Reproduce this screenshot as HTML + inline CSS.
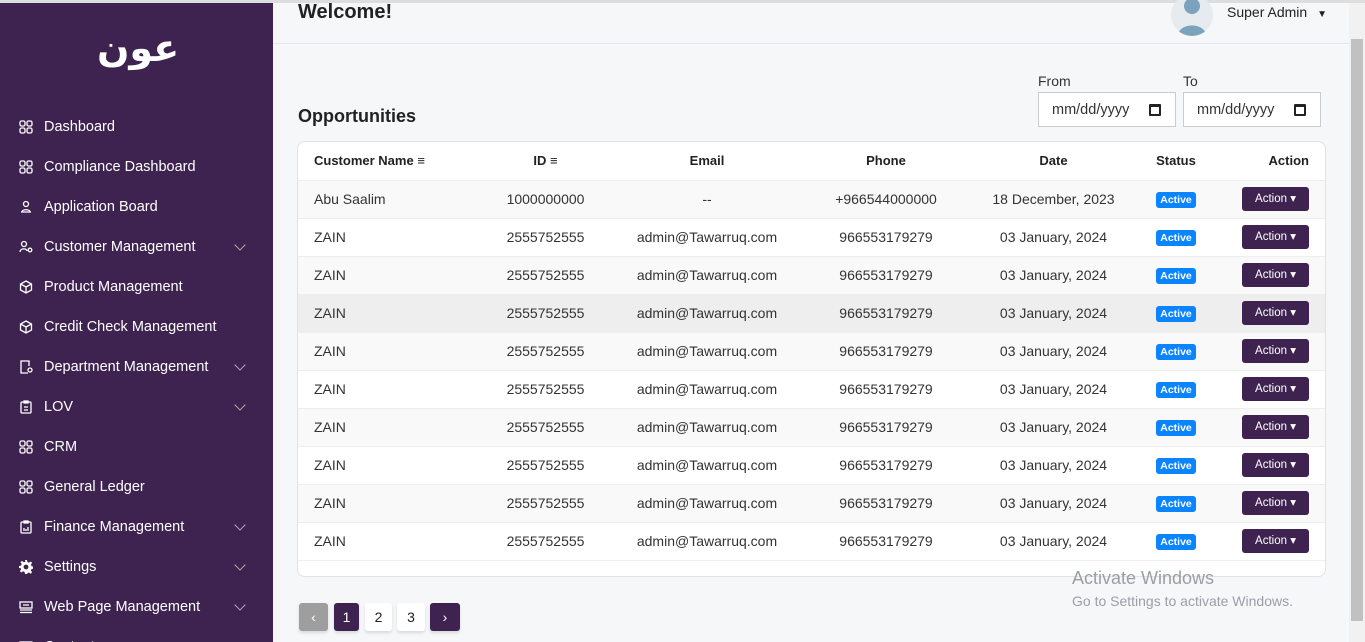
<!DOCTYPE html>
<html style="overflow:hidden;height:642px"><head><meta charset="utf-8"><style>
*{box-sizing:border-box;margin:0;padding:0}
body{width:1365px;height:642px;overflow:hidden;font-family:"Liberation Sans",sans-serif;background:#f5f7f9;position:relative;color:#222}
.top{position:absolute;left:0;top:0;width:1365px;height:3px;background:#ddd}
.side{position:absolute;left:0;top:3px;width:273px;height:639px;background:#3e2350;color:#fff;overflow:hidden}
.logo{position:absolute;left:97px;top:14px;font-family:"Noto Sans CJK SC","DejaVu Sans",sans-serif;font-size:38px;font-weight:700;color:#fff}
.nav{position:absolute;left:0;top:104px;width:273px}
.it{height:40px;display:flex;align-items:center;padding-left:19px;font-size:14.5px;position:relative}
.it svg{width:14px;height:14px;margin-right:11px;flex:none}
.it .ch{position:absolute;left:236px;top:14px;width:8px;height:8px;border-right:1px solid #aaa;border-bottom:1px solid #aaa;transform:rotate(45deg)}
.hdr{position:absolute;left:273px;top:3px;width:1076px;height:41px;border-bottom:1px solid #e3e6ea;background:#f5f7f9}
h1{position:absolute;left:298px;top:1px;font-size:20px;font-weight:700}
.av{position:absolute;left:1171px;top:-6px;width:42px;height:42px;border-radius:50%;background:#e6ebf0;overflow:hidden}
.sa{position:absolute;left:1227px;top:4px;font-size:14px}
.sb{position:absolute;left:1349px;top:3px;width:16px;height:639px;background:#f1f1f1}
.sb div{position:absolute;left:2px;top:36px;width:12px;height:582px;background:#c1c1c1}
h2{position:absolute;left:298px;top:106px;font-size:18px;font-weight:700}
.lb{position:absolute;top:73px;font-size:14px;color:#333}
.inp{position:absolute;top:92px;width:138px;height:35px;border:1px solid #ccc;background:#fff;font-size:14.5px;padding:9px 0 0 13px;color:#333}
.inp i{position:absolute;right:14px;top:11px;width:12px;height:12px;border:2px solid #222;border-top-width:3px;border-radius:1px}
.card{position:absolute;left:297px;top:141px;width:1029px;height:436px;background:#fff;border:1px solid #e3e0ea;border-radius:8px;overflow:hidden}
table{border-collapse:collapse;width:1027px;font-size:14px}
th{height:38px;font-weight:700;font-size:13px;text-align:center;border-bottom:1px solid #eee}
td{height:38px;text-align:center;border-bottom:1px solid #eee;color:#333}
tr:nth-child(even) td{background:#f9f9f9}
tr.hl td{background:#eee}
.l{text-align:left;padding-left:16px}
.r{text-align:right;padding-right:16px}
.ac{display:inline-block;background:#3e2350;color:#fff;font-size:11.5px;border-radius:3px;width:67px;height:24px;line-height:24px;text-align:center}
.bd{display:inline-block;background:#0a84ff;color:#fff;font-size:10.5px;font-weight:700;border-radius:3px;padding:2px 4px}
.pg{position:absolute;top:603px;height:28px;border-radius:3px;font-size:14px;text-align:center;line-height:28px;box-shadow:0 2px 3px rgba(0,0,0,.12)}
.wm{position:absolute;left:1072px;top:568px;color:#9a9fa6;font-size:18px}
.wm2{position:absolute;left:1072px;top:593px;color:#9a9fa6;font-size:14px}
</style></head><body>
<div class="top"></div>
<div class="side">
<div class="logo">عون</div>
<div class="nav">
<div class="it"><svg viewBox="0 0 14 14" fill="none" stroke="#fff" stroke-width="1.3"><rect x="1" y="1" width="5" height="5" rx="1.5"/><rect x="8" y="1" width="5" height="5" rx="1.5"/><rect x="1" y="8" width="5" height="5" rx="1.5"/><rect x="8" y="8" width="5" height="5" rx="1.5"/></svg>Dashboard</div>
<div class="it"><svg viewBox="0 0 14 14" fill="none" stroke="#fff" stroke-width="1.3"><rect x="1" y="1" width="5" height="5" rx="1.5"/><rect x="8" y="1" width="5" height="5" rx="1.5"/><rect x="1" y="8" width="5" height="5" rx="1.5"/><rect x="8" y="8" width="5" height="5" rx="1.5"/></svg>Compliance Dashboard</div>
<div class="it"><svg viewBox="0 0 14 14" fill="none" stroke="#fff" stroke-width="1.3"><circle cx="7" cy="4" r="2.5"/><path d="M2 12h10M3 12c0-3 8-3 8 0"/></svg>Application Board</div>
<div class="it"><svg viewBox="0 0 14 14" fill="none" stroke="#fff" stroke-width="1.3"><circle cx="5" cy="4" r="2.5"/><path d="M1 12c0-4 7-4 7-1"/><circle cx="11" cy="10" r="1.8"/></svg>Customer Management<span class="ch"></span></div>
<div class="it"><svg viewBox="0 0 14 14" fill="none" stroke="#fff" stroke-width="1.3"><path d="M7 1l5.5 3v6L7 13 1.5 10V4z M1.5 4L7 7l5.5-3M7 7v6"/></svg>Product Management</div>
<div class="it"><svg viewBox="0 0 14 14" fill="none" stroke="#fff" stroke-width="1.3"><path d="M7 1l5.5 3v6L7 13 1.5 10V4z M1.5 4L7 7l5.5-3M7 7v6"/></svg>Credit Check Management</div>
<div class="it"><svg viewBox="0 0 14 14" fill="none" stroke="#fff" stroke-width="1.3"><path d="M9 13H2V1h8v5"/><circle cx="11" cy="10" r="2"/></svg>Department Management<span class="ch"></span></div>
<div class="it"><svg viewBox="0 0 14 14" fill="none" stroke="#fff" stroke-width="1.3"><rect x="2" y="2" width="10" height="11" rx="1"/><path d="M5 1h4v2H5zM5 7h4M5 10h4"/></svg>LOV<span class="ch"></span></div>
<div class="it"><svg viewBox="0 0 14 14" fill="none" stroke="#fff" stroke-width="1.3"><rect x="1" y="1" width="5" height="5" rx="1.5"/><rect x="8" y="1" width="5" height="5" rx="1.5"/><rect x="1" y="8" width="5" height="5" rx="1.5"/><rect x="8" y="8" width="5" height="5" rx="1.5"/></svg>CRM</div>
<div class="it"><svg viewBox="0 0 14 14" fill="none" stroke="#fff" stroke-width="1.3"><rect x="1" y="1" width="5" height="5" rx="1.5"/><rect x="8" y="1" width="5" height="5" rx="1.5"/><rect x="1" y="8" width="5" height="5" rx="1.5"/><rect x="8" y="8" width="5" height="5" rx="1.5"/></svg>General Ledger</div>
<div class="it"><svg viewBox="0 0 14 14" fill="none" stroke="#fff" stroke-width="1.3"><rect x="2" y="2" width="10" height="11" rx="1"/><path d="M5 1h4v2H5zM5 11V8M7 11V9M9 11V7"/></svg>Finance Management<span class="ch"></span></div>
<div class="it"><svg viewBox="0 0 14 14" fill="#fff"><path d="M6 0h2l.4 2 1.6.7 1.7-1.2 1.4 1.4-1.2 1.7.7 1.6 2 .4v2l-2 .4-.7 1.6 1.2 1.7-1.4 1.4-1.7-1.2-1.6.7L8 14H6l-.4-2-1.6-.7-1.7 1.2-1.4-1.4 1.2-1.7L1.4 8 0 8V6l2-.4.7-1.6-1.2-1.7 1.4-1.4 1.7 1.2L6.4 2zM7 4.6A2.4 2.4 0 107 9.4 2.4 2.4 0 007 4.6z"/></svg>Settings<span class="ch"></span></div>
<div class="it"><svg viewBox="0 0 14 14" fill="none" stroke="#fff" stroke-width="1.3"><rect x="1" y="2" width="12" height="6"/><path d="M1 10h12M1 12.5h12M4 5h6"/></svg>Web Page Management<span class="ch"></span></div>
<div class="it"><svg viewBox="0 0 14 14" fill="none" stroke="#fff" stroke-width="1.3"><rect x="1" y="2" width="12" height="11"/></svg>Content</div>
</div></div>
<div class="hdr"></div>
<h1>Welcome!</h1>
<div class="av"><svg width="42" height="42" viewBox="0 0 42 42"><circle cx="21" cy="12" r="8" fill="#7ba3bb"/><path d="M7 42c0-14 28-14 28 0z" fill="#7ba3bb"/></svg></div>
<div class="sa">Super Admin <span style="font-size:10px;margin-left:6px">▼</span></div>
<div class="sb"><div></div></div>
<h2>Opportunities</h2>
<div class="lb" style="left:1038px">From</div><div class="lb" style="left:1183px">To</div>
<div class="inp" style="left:1038px">mm/dd/yyyy<i></i></div>
<div class="inp" style="left:1183px">mm/dd/yyyy<i></i></div>
<div class="card"><table>
<tr><th class="l" style="width:170px">Customer Name <span style="font-weight:400">≡</span></th><th style="width:155px">ID <span style="font-weight:400">≡</span></th><th style="width:168px">Email</th><th style="width:190px">Phone</th><th style="width:145px">Date</th><th style="width:100px">Status</th><th class="r">Action</th></tr>
<tr><td class="l">Abu Saalim</td><td>1000000000</td><td>--</td><td>+966544000000</td><td>18 December, 2023</td><td><span class="bd">Active</span></td><td class="r"><span class="ac">Action ▾</span></td></tr>
<tr><td class="l">ZAIN</td><td>2555752555</td><td>admin@Tawarruq.com</td><td>966553179279</td><td>03 January, 2024</td><td><span class="bd">Active</span></td><td class="r"><span class="ac">Action ▾</span></td></tr>
<tr><td class="l">ZAIN</td><td>2555752555</td><td>admin@Tawarruq.com</td><td>966553179279</td><td>03 January, 2024</td><td><span class="bd">Active</span></td><td class="r"><span class="ac">Action ▾</span></td></tr>
<tr class="hl"><td class="l">ZAIN</td><td>2555752555</td><td>admin@Tawarruq.com</td><td>966553179279</td><td>03 January, 2024</td><td><span class="bd">Active</span></td><td class="r"><span class="ac">Action ▾</span></td></tr>
<tr><td class="l">ZAIN</td><td>2555752555</td><td>admin@Tawarruq.com</td><td>966553179279</td><td>03 January, 2024</td><td><span class="bd">Active</span></td><td class="r"><span class="ac">Action ▾</span></td></tr>
<tr><td class="l">ZAIN</td><td>2555752555</td><td>admin@Tawarruq.com</td><td>966553179279</td><td>03 January, 2024</td><td><span class="bd">Active</span></td><td class="r"><span class="ac">Action ▾</span></td></tr>
<tr><td class="l">ZAIN</td><td>2555752555</td><td>admin@Tawarruq.com</td><td>966553179279</td><td>03 January, 2024</td><td><span class="bd">Active</span></td><td class="r"><span class="ac">Action ▾</span></td></tr>
<tr><td class="l">ZAIN</td><td>2555752555</td><td>admin@Tawarruq.com</td><td>966553179279</td><td>03 January, 2024</td><td><span class="bd">Active</span></td><td class="r"><span class="ac">Action ▾</span></td></tr>
<tr><td class="l">ZAIN</td><td>2555752555</td><td>admin@Tawarruq.com</td><td>966553179279</td><td>03 January, 2024</td><td><span class="bd">Active</span></td><td class="r"><span class="ac">Action ▾</span></td></tr>
<tr><td class="l">ZAIN</td><td>2555752555</td><td>admin@Tawarruq.com</td><td>966553179279</td><td>03 January, 2024</td><td><span class="bd">Active</span></td><td class="r"><span class="ac">Action ▾</span></td></tr>
</table></div>
<div class="pg" style="left:299px;width:29px;background:#9e9e9e;color:#fff">‹</div>
<div class="pg" style="left:334px;width:25px;background:#3e2350;color:#fff">1</div>
<div class="pg" style="left:365px;width:27px;background:#fff">2</div>
<div class="pg" style="left:397px;width:28px;background:#fff">3</div>
<div class="pg" style="left:430px;width:30px;background:#3e2350;color:#fff">›</div>
<div class="wm">Activate Windows</div>
<div class="wm2">Go to Settings to activate Windows.</div>
</body></html>
